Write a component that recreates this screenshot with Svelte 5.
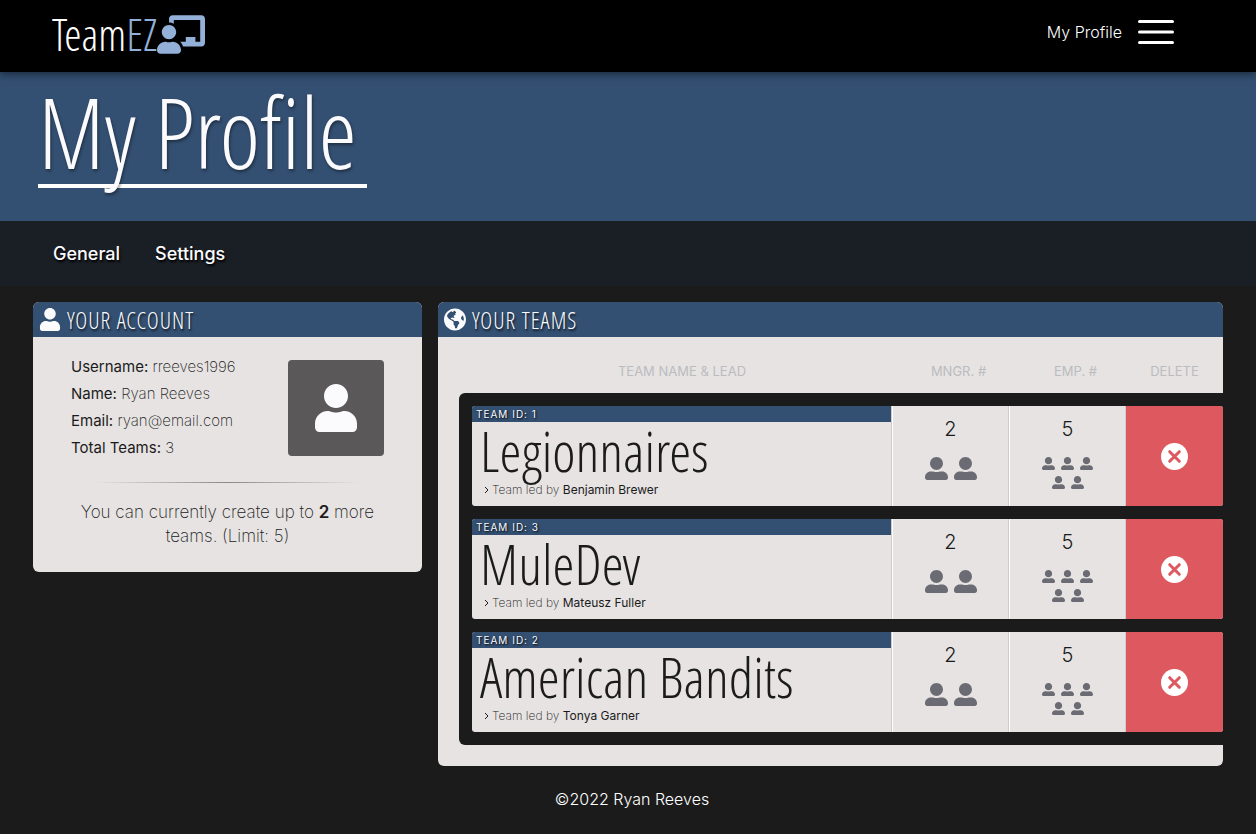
<script>
  const userPath = 'M224 256c70.7 0 128-57.3 128-128S294.7 0 224 0 96 57.3 96 128s57.3 128 128 128zm89.6 32h-16.7c-22.2 10.2-46.9 16-72.9 16s-50.6-5.8-72.9-16h-16.7C60.2 288 0 348.2 0 422.4V464c0 26.5 21.5 48 48 48h352c26.5 0 48-21.5 48-48v-41.6c0-74.2-60.2-134.4-134.4-134.4z';
  const memberPath = 'M256 288c79.5 0 144-64.5 144-144S335.5 0 256 0 112 64.5 112 144s64.5 144 144 144zm128 32h-55.1c-22.2 10.2-46.9 16-72.9 16s-50.6-5.8-72.9-16H128C57.3 320 0 377.3 0 448v16c0 26.5 21.5 48 48 48h416c26.5 0 48-21.5 48-48v-16c0-70.7-57.3-128-128-128z';
  const boardPath = 'M208 352c-2.39 0-4.78.35-7.06 1.09C187.98 357.3 174.35 360 160 360c-14.28 0-27.98-2.7-40.95-6.91-2.28-.74-4.66-1.09-7.05-1.09C49.94 352-.33 402.48 0 464.62.14 490.88 21.73 512 48 512h224c26.27 0 47.86-21.12 48-47.38.33-62.14-49.94-112.62-112-112.62zm-48-32c53.02 0 96-42.98 96-96s-42.98-96-96-96-96 42.98-96 96 42.98 96 96 96zM592 0H208c-26.47 0-48 22.25-48 49.59V96c23.42 0 45.1 6.78 64 17.8V64h352v288h-64v-64H384v64h-76.24c19.1 16.69 33.12 38.73 39.69 64H592c26.47 0 48-22.25 48-49.59V49.59C640 22.25 618.47 0 592 0z';
  const globePath = 'M248 8C111.03 8 0 119.03 0 256s111.03 248 248 248 248-111.03 248-248S384.97 8 248 8zm82.29 357.6c-3.9 3.88-7.99 7.95-11.31 11.28-2.99 3-5.1 6.7-6.17 10.71-1.51 5.66-2.73 11.38-4.77 16.87l-17.39 46.85c-13.76 3-28 4.69-42.65 4.69v-27.38c1.69-12.62-7.64-36.26-22.63-51.25-6-6-9.37-14.14-9.37-22.63v-32.01c0-11.64-6.27-22.34-16.46-27.97-14.37-7.95-34.81-19.06-48.81-26.11-11.48-5.78-22.1-13.14-31.65-21.75l-.8-.72a114.792 114.792 0 0 1-18.06-20.74c-9.38-13.77-24.66-36.42-34.59-51.14 20.47-45.5 57.36-82.04 103.2-101.89l24.01 12.01C203.48 89.74 216 82.01 216 70.11v-11.3c7.99-1.29 16.12-2.11 24.39-2.42l28.3 28.3c6.25 6.25 6.25 16.38 0 22.63L264 112l-10.34 10.34c-3.12 3.12-3.12 8.19 0 11.31l4.69 4.69c3.12 3.12 3.12 8.19 0 11.31l-8 8a8.008 8.008 0 0 1-5.66 2.34h-8.99c-2.08 0-4.08.81-5.58 2.27l-9.92 9.65a8.008 8.008 0 0 0-1.58 9.31l15.59 31.19c2.66 5.32-1.21 11.58-7.15 11.58h-5.64c-1.93 0-3.79-.7-5.24-1.96l-9.28-8.06a16.017 16.017 0 0 0-15.55-3.1l-31.17 10.39a11.95 11.95 0 0 0-8.17 11.34c0 4.53 2.56 8.66 6.61 10.69l11.08 5.54c9.41 4.71 19.79 7.16 30.31 7.16s22.59 27.29 32 32h66.75c8.49 0 16.62 3.37 22.63 9.37l13.69 13.69a30.503 30.503 0 0 1 8.93 21.57 46.536 46.536 0 0 1-13.72 32.98zM417 274.25c-5.79-1.45-10.84-5-14.15-9.97l-17.98-26.97a23.97 23.97 0 0 1 0-26.62l19.59-29.38c2.32-3.47 5.5-6.29 9.24-8.15l12.98-6.49C440.2 193.59 448 223.87 448 256c0 8.67-.74 17.16-1.82 25.54L417 274.25z';

  const account = [
    ['Username:', 'rreeves1996'],
    ['Name:', 'Ryan Reeves'],
    ['Email:', 'ryan@email.com'],
    ['Total Teams:', '3']
  ];

  const teams = [
    { id: 1, name: 'Legionnaires', lead: 'Benjamin Brewer', managers: 2, employees: 5 },
    { id: 3, name: 'MuleDev', lead: 'Mateusz Fuller', managers: 2, employees: 5 },
    { id: 2, name: 'American Bandits', lead: 'Tonya Garner', managers: 2, employees: 5 }
  ];
</script>

{#snippet people(count)}
  <span class="people">
    {#each Array(count) as _}
      <svg viewBox="0 0 512 512" aria-hidden="true"><path d={memberPath} /></svg>
    {/each}
  </span>
{/snippet}

<header>
  <a class="logo" href="#home">
    <span>Team</span><span class="ez">EZ</span>
    <svg viewBox="0 0 640 512" aria-hidden="true"><path d={boardPath} /></svg>
  </a>
  <nav class="menu">
    <a href="#profile">My Profile</a>
    <button aria-label="Menu">
      <svg viewBox="0 0 36 24" aria-hidden="true"><path d="M1.5 1.5h33M1.5 12h33M1.5 22.5h33" /></svg>
    </button>
  </nav>
</header>

<section class="hero"><h1>My Profile</h1></section>

<nav class="tabs">
  <a href="#general">General</a>
  <a href="#settings">Settings</a>
</nav>

<main>
  <section class="card">
    <h2><svg viewBox="0 0 448 512" aria-hidden="true"><path d={userPath} /></svg>YOUR ACCOUNT</h2>
    <div class="account">
      <div class="summary">
        <ul>
          {#each account as [label, value]}
            <li><b>{label}</b> {value}</li>
          {/each}
        </ul>
        <div class="avatar"><svg viewBox="0 0 448 512" aria-hidden="true"><path d={userPath} /></svg></div>
      </div>
      <hr />
      <p>You can currently create up to <b>2</b> more teams. (Limit: 5)</p>
    </div>
  </section>

  <section class="card">
    <h2><svg viewBox="0 8 496 496" aria-hidden="true"><path d={globePath} /></svg>YOUR TEAMS</h2>
    <table>
      <thead>
        <tr>
          <th>TEAM NAME &amp; LEAD</th>
          <th class="count">MNGR. #</th>
          <th class="count">EMP. #</th>
          <th>DELETE</th>
        </tr>
      </thead>
      <tbody>
        {#each teams as team (team.id)}
          <tr>
            <td class="team">
              <div class="id">TEAM ID: {team.id}</div>
              <h3>{team.name}</h3>
              <div class="lead">
                <svg viewBox="0 0 5 8" aria-hidden="true"><path d="M1 1l3 3-3 3" /></svg>
                <span>Team led by <b>{team.lead}</b></span>
              </div>
            </td>
            <td class="number">{team.managers}{@render people(team.managers)}</td>
            <td class="number small">{team.employees}{@render people(team.employees)}</td>
            <td class="delete">
              <button aria-label="Delete {team.name}">
                <svg viewBox="0 0 27 27" aria-hidden="true">
                  <circle cx="13.5" cy="13.5" r="13.5" />
                  <path d="M8.7 8.7l9.6 9.6M18.3 8.7l-9.6 9.6" />
                </svg>
              </button>
            </td>
          </tr>
        {/each}
      </tbody>
    </table>
  </section>
</main>

<footer>©2022 Ryan Reeves</footer>

<style>
  :global(body) {
    margin: 0;
    background: #1b1b1b;
    color: #1b1b1b;
    font-family: Inter, "Open Sans", sans-serif;
    font-weight: 200;
  }
  :global(*) { box-sizing: border-box; }
  a { color: inherit; text-decoration: none; }
  button { border: 0; padding: 0; background: none; color: inherit; cursor: pointer; }
  svg { display: block; fill: currentColor; }
  b { font-weight: 400; }
  h1, h2, h3, .logo {
    margin: 0;
    font-family: "Open Sans Condensed Light", "Open Sans Condensed", "Roboto Condensed", sans-serif;
    font-weight: 300;
  }

  header {
    position: relative;
    display: flex;
    align-items: center;
    justify-content: space-between;
    height: 72px;
    padding: 0 82px 8px 52px;
    background: #000;
    color: #fff;
    box-shadow: 0 2px 8px rgba(0, 0, 0, 0.5);
  }
  .logo {
    display: flex;
    align-items: center;
    padding-top: 4px;
    font-size: 44px;
    line-height: 48px;
  }
  .logo .ez, .logo svg { color: #92b0d8; }
  .logo svg { width: 48px; height: 39px; }
  .menu { display: flex; align-items: center; gap: 16px; font-size: 16px; font-weight: 300; }
  .menu svg { width: 36px; height: 24px; fill: none; stroke: #fff; stroke-width: 3; stroke-linecap: round; }

  .hero { height: 149px; padding: 14px 38px; background: #334f71; }
  h1 {
    display: inline-block;
    padding: 0 10px 8px 0;
    border-bottom: 4px solid #fff;
    color: #fbfbfd;
    font-size: 98px;
    line-height: 90px;
    text-shadow: 1px 2px 3px rgba(0, 0, 0, 0.4);
  }

  .tabs {
    display: flex;
    align-items: center;
    gap: 35px;
    height: 65px;
    padding: 0 53px;
    background: #1a1e25;
    color: #fbfbfd;
    font-size: 18px;
    font-weight: 500;
    text-shadow: 1px 2px 2px #000;
  }

  main {
    display: grid;
    grid-template-columns: 389fr 785fr;
    align-items: start;
    gap: 16px;
    padding: 16px 33px 0;
  }
  .card { overflow: hidden; border-radius: 6px; background: #e6e3e2; }
  h2 {
    display: flex;
    align-items: center;
    gap: 6px;
    height: 35px;
    padding: 0 6px;
    background: #334f71;
    color: #fbfbfd;
    font-size: 23px;
    line-height: 32px;
    letter-spacing: 1px;
    text-shadow: 1px 2px 2px rgba(0, 0, 0, 0.7);
  }
  h2 svg { width: 22px; height: 23px; }

  .account { padding: 16px 38px 24px; }
  .summary { display: flex; justify-content: space-between; font-size: 15px; }
  ul { margin: 0; padding: 0; list-style: none; line-height: 27px; }
  .avatar {
    display: grid;
    place-items: center;
    width: 96px;
    height: 96px;
    margin-top: 7px;
    border-radius: 4px;
    background: #5a5859;
    color: #fbfbfd;
  }
  .avatar svg { width: 42px; height: 48px; }
  hr {
    height: 1px;
    margin: 21px 24px 17px;
    border: 0;
    background: linear-gradient(90deg, transparent, #8c8989, transparent);
  }
  p { margin: 0; font-size: 17px; line-height: 24px; text-align: center; }
  p b { font-weight: 600; }

  table { display: block; padding: 12px 0 21px 21px; }
  thead, tbody { display: block; padding-left: 13px; }
  tr {
    display: grid;
    grid-template-columns: minmax(0, 1fr) 117px 117px 97px;
  }
  th {
    padding: 0;
    color: #bbbcc0;
    font-size: 13px;
    font-weight: 400;
    line-height: 44px;
  }
  th.count { padding-left: 16px; }
  tbody {
    display: grid;
    gap: 13px;
    padding: 13px 0 13px 13px;
    border-radius: 6px 0 0 6px;
    background: #1b1b1b;
  }
  tbody tr { height: 100px; overflow: hidden; border-radius: 3px; background: #e6e3e2; }
  td { padding: 0; }
  .team { border-right: 1px solid #cfcccc; }
  .id {
    height: 16px;
    padding-left: 4px;
    background: #334f71;
    color: #fbfbfd;
    font-size: 10px;
    font-weight: 400;
    line-height: 16px;
    letter-spacing: 1px;
    text-shadow: 1px 1px 2px #000;
  }
  h3 { padding: 0 0 4px 8px; font-size: 56px; line-height: 56px; white-space: nowrap; }
  .lead { display: flex; align-items: center; gap: 3px; padding-left: 12px; font-size: 12px; line-height: 16px; }
  .lead svg { width: 5px; height: 8px; fill: none; stroke: currentColor; }
  .number {
    padding-top: 9px;
    border-left: 1px solid #fff;
    border-right: 1px solid #cfcccc;
    font-size: 20px;
    font-weight: 300;
    line-height: 28px;
    text-align: center;
  }
  .people {
    display: flex;
    flex-wrap: wrap;
    justify-content: center;
    gap: 6px;
    padding: 14px 24px 0;
    color: #6b6b74;
  }
  .people svg { width: 23px; height: 23px; }
  .small .people svg { width: 13px; height: 13px; }
  .delete { display: grid; background: #dd595f; color: #fff; }
  .delete button { display: grid; place-items: center; }
  .delete svg { width: 27px; height: 27px; }
  .delete path { stroke: #dd595f; stroke-width: 3; stroke-linecap: round; }

  footer {
    padding: 20px 0 20px 8px;
    color: #fff;
    font-size: 16px;
    font-weight: 300;
    line-height: 26px;
    text-align: center;
  }
</style>
